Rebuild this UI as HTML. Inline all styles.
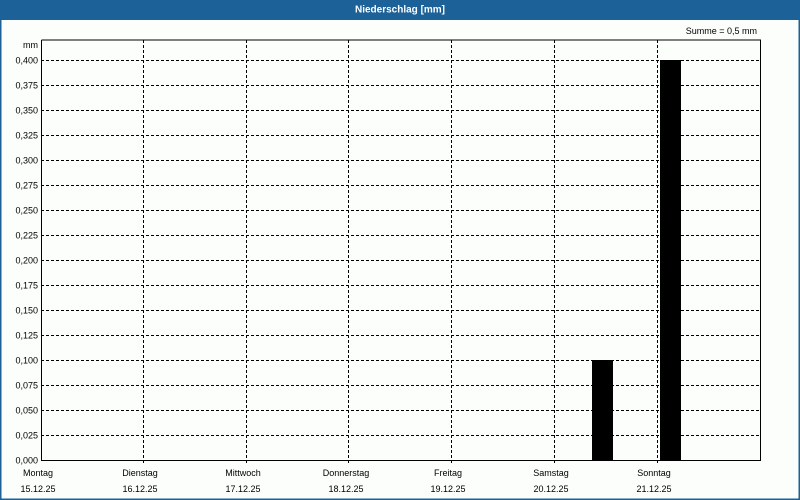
<!DOCTYPE html>
<html><head><meta charset="utf-8"><style>
html,body{margin:0;padding:0;width:800px;height:500px;overflow:hidden;background:#fcfefc}
svg{display:block}
text{font-family:"Liberation Sans",sans-serif;font-size:9px;fill:#000}
</style></head><body>
<svg width="800" height="500" xmlns="http://www.w3.org/2000/svg">
<rect x="0" y="0" width="800" height="500" fill="#fcfefc"/>
<rect x="0.5" y="0.5" width="799" height="499" fill="none" stroke="#1c6198" stroke-width="2"/>
<rect x="0" y="0" width="800" height="20" fill="#1c6198"/>
<text x="400" y="12.5" text-anchor="middle" style="font-weight:bold;font-size:10px;fill:#fff">Niederschlag [mm]</text>
<text x="757" y="34" text-anchor="end">Summe = 0,5 mm</text>
<g stroke="#000" stroke-width="1" stroke-dasharray="3,2">
<line x1="41" y1="60.5" x2="760" y2="60.5"/><line x1="41" y1="85.5" x2="760" y2="85.5"/><line x1="41" y1="110.5" x2="760" y2="110.5"/><line x1="41" y1="135.5" x2="760" y2="135.5"/><line x1="41" y1="160.5" x2="760" y2="160.5"/><line x1="41" y1="185.5" x2="760" y2="185.5"/><line x1="41" y1="210.5" x2="760" y2="210.5"/><line x1="41" y1="235.5" x2="760" y2="235.5"/><line x1="41" y1="260.5" x2="760" y2="260.5"/><line x1="41" y1="285.5" x2="760" y2="285.5"/><line x1="41" y1="310.5" x2="760" y2="310.5"/><line x1="41" y1="335.5" x2="760" y2="335.5"/><line x1="41" y1="360.5" x2="760" y2="360.5"/><line x1="41" y1="385.5" x2="760" y2="385.5"/><line x1="41" y1="410.5" x2="760" y2="410.5"/><line x1="41" y1="435.5" x2="760" y2="435.5"/>
<line x1="143.5" y1="40" x2="143.5" y2="464"/><line x1="246.5" y1="40" x2="246.5" y2="464"/><line x1="348.5" y1="40" x2="348.5" y2="464"/><line x1="451.5" y1="40" x2="451.5" y2="464"/><line x1="554.5" y1="40" x2="554.5" y2="464"/><line x1="657.5" y1="40" x2="657.5" y2="464"/>
</g>
<rect x="592" y="360" width="21" height="100" fill="#000"/>
<rect x="660" y="60" width="21" height="400" fill="#000"/>
<polyline points="41.5,40 41.5,460.5 760.5,460.5 760.5,40 41.5,40" fill="none" stroke="#000" stroke-width="1"/>
<g text-anchor="end">
<text x="38" y="48">mm</text>
<text x="38" y="63.5">0,400</text><text x="38" y="88.5">0,375</text><text x="38" y="113.5">0,350</text><text x="38" y="138.5">0,325</text><text x="38" y="163.5">0,300</text><text x="38" y="188.5">0,275</text><text x="38" y="213.5">0,250</text><text x="38" y="238.5">0,225</text><text x="38" y="263.5">0,200</text><text x="38" y="288.5">0,175</text><text x="38" y="313.5">0,150</text><text x="38" y="338.5">0,125</text><text x="38" y="363.5">0,100</text><text x="38" y="388.5">0,075</text><text x="38" y="413.5">0,050</text><text x="38" y="438.5">0,025</text><text x="38" y="463.5">0,000</text>
</g>
<g text-anchor="middle">
<text x="38" y="476">Montag</text><text x="38" y="492">15.12.25</text>
<text x="140" y="476">Dienstag</text><text x="140" y="492">16.12.25</text>
<text x="243" y="476">Mittwoch</text><text x="243" y="492">17.12.25</text>
<text x="346" y="476">Donnerstag</text><text x="346" y="492">18.12.25</text>
<text x="448" y="476">Freitag</text><text x="448" y="492">19.12.25</text>
<text x="551" y="476">Samstag</text><text x="551" y="492">20.12.25</text>
<text x="654" y="476">Sonntag</text><text x="654" y="492">21.12.25</text>
</g>
</svg>
</body></html>
